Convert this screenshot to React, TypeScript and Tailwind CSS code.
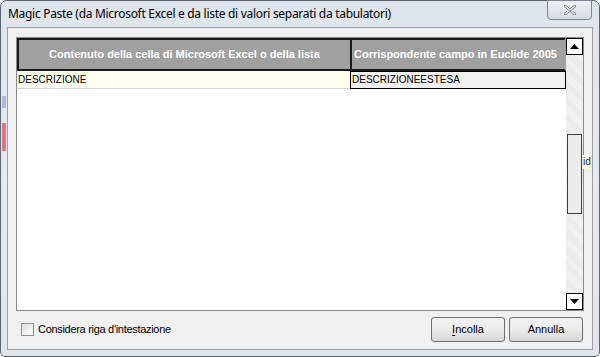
import React from "react";

const grid = { fontFamily: "'Liberation Sans', Arial, sans-serif" };
const ui = { fontFamily: "'Segoe UI', 'Noto Sans', 'Liberation Sans', sans-serif" };

function ScrollButton({ up }: { up?: boolean }) {
  return (
    <div className="h-[17px] w-[17px] shrink-0 border border-black bg-white flex items-center justify-center">
      <svg width="9" height="5" viewBox="0 0 9 5">
        {up ? <polygon points="0,5 9,5 4.5,0" fill="#000" /> : <polygon points="0,0 9,0 4.5,5" fill="#000" />}
      </svg>
    </div>
  );
}

export default function App() {
  return (
    <div className="w-[600px] h-[357px] bg-white">
      <div
        className="relative w-[600px] h-[357px] flex flex-col rounded-t-[7px] rounded-b-[5px] border border-[#5c6670] bg-gradient-to-b from-[#dfe5ec] via-[#e6eaee] to-[#e2e6ea]"
        style={ui}
      >
        {/* title bar */}
        <div className="h-[26px] flex items-center pl-[7px] text-[12px] text-black tracking-[-0.3px] whitespace-nowrap">
          Magic Paste (da Microsoft Excel e da liste di valori separati da tabulatori)
        </div>

        {/* close button */}
        <div className="absolute top-[-1px] right-[7px] w-[45px] h-[20px] rounded-b-[4px] border border-[#7d8896] bg-gradient-to-b from-[#eef1f4] to-[#d5dbe2] flex items-center justify-center">
          <svg width="12" height="10" viewBox="0 0 12 10">
            <path d="M1 1 L11 9 M11 1 L1 9" stroke="#6b737c" strokeWidth="2.6" strokeLinecap="round" />
            <path d="M1 1 L11 9 M11 1 L1 9" stroke="#f4f6f8" strokeWidth="1.1" strokeLinecap="round" />
          </svg>
        </div>

        {/* left glass bleed */}
        <div className="absolute left-[1px] top-[95px] w-[4px] h-[12px] bg-[#8e98c8] opacity-60" />
        <div className="absolute left-[1px] top-[122px] w-[4px] h-[28px] bg-[#e04050] opacity-70" />

        {/* client area */}
        <div className="mx-[6px] mb-[6px] flex-1 flex flex-col border border-[#9aa3ad] bg-[#f0f0f0] relative">
          <div className="absolute right-[1px] top-[127px] w-[8px] h-[14px] bg-[#fbf8d8] text-[10px] leading-[14px] text-[#1c2b8c] overflow-hidden" style={grid}>
            id
          </div>

          <div className="mt-[9px] ml-[8px] mr-[8px] h-[274px] border border-[#8a8a8a] bg-white flex" style={grid}>
            <div className="flex-1 min-w-0 flex flex-col">
              {/* header */}
              <div className="flex h-[33px] text-[11px] font-bold text-white">
                <div className="w-[333px] shrink-0 bg-[#a0a0a0] border-2 border-[#1a1a1a] border-r-0 flex items-center justify-center">
                  Contenuto della cella di Microsoft Excel o della lista
                </div>
                <div className="flex-1 min-w-0 bg-[#a0a0a0] border-2 border-[#1a1a1a] border-r-[#a0a0a0] flex items-center pl-[2px] whitespace-nowrap overflow-hidden">
                  Corrispondente campo in Euclide 2005
                </div>
              </div>
              {/* row */}
              <div className="flex h-[18px] text-[10px] text-black">
                <div className="w-[333px] shrink-0 bg-[#fffff0] border-b border-[#d8d8d0] pl-[1px] leading-[17px]">DESCRIZIONE</div>
                <div className="flex-1 min-w-0 bg-[#f0f0f0] border border-black pl-[1px] leading-[16px]">DESCRIZIONEESTESA</div>
              </div>
              <div className="flex-1" />
            </div>
            {/* scrollbar */}
            <div
              className="w-[17px] shrink-0 flex flex-col"
              style={{ backgroundImage: "repeating-linear-gradient(45deg, #f4f4f4 0 1px, #e8e8e8 1px 2px)" }}
            >
              <ScrollButton up />
              <div className="h-[79px]" />
              <div className="h-[80px] mx-[1px] border border-[#404040] bg-[#ececec]" />
              <div className="flex-1" />
              <ScrollButton />
            </div>
          </div>

          {/* footer */}
          <div className="flex-1 flex items-center pl-[13px] pr-[9px] pb-[2px]" style={grid}>
            <div className="flex items-center gap-[4px] text-[11px] text-black">
              <div className="w-[13px] h-[13px] border border-[#8e8f8f] bg-gradient-to-br from-[#dcdcdc] to-white" />
              <span className="tracking-[-0.3px]">Considera riga d'intestazione</span>
            </div>
            <div className="flex-1" />
            <div className="flex gap-[4px]">
              <button className="w-[74px] h-[25px] rounded-[3px] border border-[#707070] bg-gradient-to-b from-[#f2f2f2] via-[#ebebeb] to-[#d6d6d6] text-[11px] text-black">
                <span className="underline underline-offset-2">I</span>ncolla
              </button>
              <button className="w-[74px] h-[25px] rounded-[3px] border border-[#707070] bg-gradient-to-b from-[#f2f2f2] via-[#ebebeb] to-[#d6d6d6] text-[11px] text-black">
                Annulla
              </button>
            </div>
          </div>
        </div>
      </div>
    </div>
  );
}
